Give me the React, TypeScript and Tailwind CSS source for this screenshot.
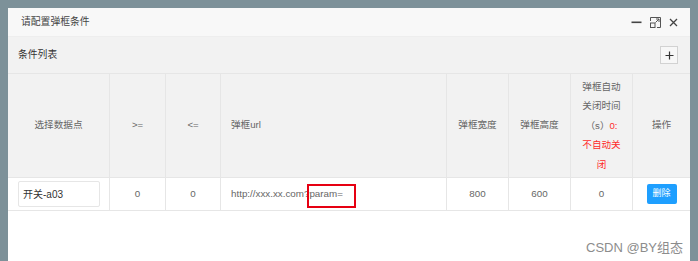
import React from "react";

const font = { fontFamily: '"Liberation Sans", "Noto Sans CJK SC", sans-serif' };

function HeaderCell({ children, left = false, last = false }: { children: React.ReactNode; left?: boolean; last?: boolean }) {
  return (
    <div
      className={`flex items-center ${left ? "justify-start pl-[10px]" : "justify-center"} ${last ? "" : "border-r border-[#e6e6e6]"} text-[9.6px] text-[#666] bg-[#f2f2f2]`}
    >
      {children}
    </div>
  );
}

function DataCell({ children, left = false, last = false, extra = "" }: { children: React.ReactNode; left?: boolean; last?: boolean; extra?: string }) {
  return (
    <div
      className={`flex items-center ${left ? "justify-start pl-[10px]" : "justify-center"} ${last ? "" : "border-r border-[#e6e6e6]"} text-[9.8px] text-[#666] bg-white ${extra}`}
    >
      {children}
    </div>
  );
}

export default function App() {
  return (
    <div className="w-[698px] h-[261px] bg-[#7d9199] pt-[8px] px-[8px] overflow-hidden" style={font}>
      <div className="w-[682px] h-[253px] bg-white flex flex-col relative">
        {/* title bar */}
        <div className="h-[29px] bg-[#f8f8f8] border-b border-[#eeeeee] flex items-center justify-between pl-[13px] pr-[12px] shrink-0">
          <span className="text-[9.8px] text-[#444]">请配置弹框条件</span>
          <div className="flex items-center gap-[8px]">
            <svg width="11" height="10" viewBox="0 0 11 10">
              <rect x="0.5" y="4.5" width="10" height="1.6" fill="#444" />
            </svg>
            <svg width="11" height="11" viewBox="0 0 11 11">
              <path d="M0.5 4 V0.5 H10.5 V10.5 H7" fill="none" stroke="#555" strokeWidth="1" />
              <rect x="0.5" y="6" width="4.5" height="4.5" fill="none" stroke="#555" strokeWidth="1" />
              <path d="M5.5 5.5 L9 2 M6 2 H9 V5" fill="none" stroke="#555" strokeWidth="1" />
            </svg>
            <svg width="9" height="9" viewBox="0 0 9 9">
              <path d="M1 1 L8 8 M8 1 L1 8" stroke="#444" strokeWidth="1.3" />
            </svg>
          </div>
        </div>
        {/* toolbar */}
        <div className="h-[36px] bg-[#f2f2f2] flex items-center justify-between pl-[10px] pr-[12px] shrink-0">
          <span className="text-[9.8px] text-[#333]">条件列表</span>
          <div className="w-[18px] h-[18px] border border-[#d2d2d2] bg-[#f7f7f7] flex items-center justify-center">
            <svg width="9" height="9" viewBox="0 0 9 9">
              <path d="M4.5 0.5 V8.5 M0.5 4.5 H8.5" stroke="#333" strokeWidth="1.2" />
            </svg>
          </div>
        </div>
        {/* table */}
        <div className="grid grid-cols-[102px_56px_55px_226px_62px_62px_62px_57px] grid-rows-[103px_33px] border-t border-b border-[#e6e6e6]">
          <HeaderCell>选择数据点</HeaderCell>
          <HeaderCell>&gt;=</HeaderCell>
          <HeaderCell>&lt;=</HeaderCell>
          <HeaderCell left>弹框url</HeaderCell>
          <HeaderCell>弹框宽度</HeaderCell>
          <HeaderCell>弹框高度</HeaderCell>
          <HeaderCell>
            <div className="text-center leading-[19.6px]">
              <div>弹框自动</div>
              <div>关闭时间</div>
              <div>
                （s）<span className="text-[#ff2a2a]">0:</span>
              </div>
              <div className="text-[#ff2a2a]">不自动关</div>
              <div className="text-[#ff2a2a]">闭</div>
            </div>
          </HeaderCell>
          <HeaderCell last>操作</HeaderCell>

          <DataCell left extra="border-t border-[#e6e6e6]">
            <div className="w-[82px] h-[26px] border border-[#e6e6e6] rounded-[2px] bg-white flex items-center pl-[4px] text-[10px] text-[#333]">
              开关-a03
            </div>
          </DataCell>
          <DataCell extra="border-t border-[#e6e6e6]">0</DataCell>
          <DataCell extra="border-t border-[#e6e6e6]">0</DataCell>
          <DataCell left extra="border-t border-[#e6e6e6] relative">
            <span>http://xxx.xx.com?param=</span>
            <div className="absolute left-[86px] top-[6px] w-[49px] h-[24px] border-2 border-[#e60012]" />
          </DataCell>
          <DataCell extra="border-t border-[#e6e6e6]">800</DataCell>
          <DataCell extra="border-t border-[#e6e6e6]">600</DataCell>
          <DataCell extra="border-t border-[#e6e6e6]">0</DataCell>
          <DataCell last extra="border-t border-[#e6e6e6]">
            <div className="w-[30px] h-[20px] bg-[#1e9fff] rounded-[2px] flex items-center justify-center text-[9px] text-white">
              删除
            </div>
          </DataCell>
        </div>
        <div className="flex-1 flex items-end justify-end pr-[7px] pb-[4px]">
          <span className="text-[13px] text-[#8c8c8c]">CSDN @BY组态</span>
        </div>
      </div>
    </div>
  );
}
